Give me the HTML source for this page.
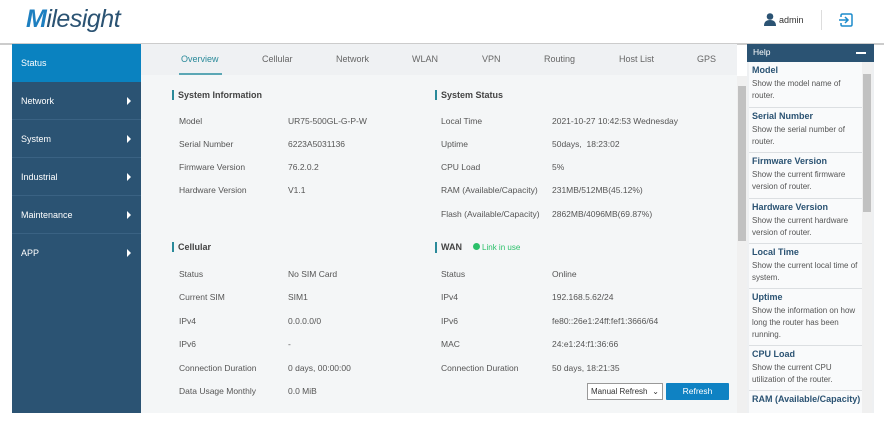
<!DOCTYPE html>
<html><head><meta charset="utf-8"><style>
*{margin:0;padding:0;box-sizing:border-box}
body{width:884px;height:422px;background:#fff;font-family:"Liberation Sans",sans-serif;position:relative;overflow:hidden;color:#333}
.a{position:absolute;white-space:nowrap}
.side{left:12px;top:44px;width:129px;height:369px;background:#2b5373}
.si{position:absolute;left:0;width:129px;height:38px;color:#fff;font-size:9px;padding-left:9px;line-height:38px;border-bottom:1px solid #3a6283}
.si i{position:absolute;right:10px;top:15px;width:0;height:0;border-left:4px solid #fff;border-top:4px solid transparent;border-bottom:4px solid transparent}
.main{left:141px;top:44px;width:596px;height:369px;background:#f4f6f7}
.tab{position:absolute;top:10px;font-size:9px;color:#666}
.t{font-size:8.5px;color:#555}
.h{font-size:9px;font-weight:bold;color:#444;border-left:2px solid #2a8a9a;padding-left:4px;line-height:10px}
.help{left:747px;top:44px;width:127px;height:369px;background:#eef0f2;overflow:hidden}
.hi{position:absolute;left:2px;width:113px;background:#f9fafb;border-bottom:1px solid #dcdfe2;padding:3px 3px;white-space:normal;overflow:hidden}
.hi b{display:block;font-size:9px;color:#2b5373;margin-bottom:3px;white-space:nowrap}
.hi span{display:block;font-size:8px;color:#555;line-height:12px}
</style></head><body>
<div class="a" style="left:26px;top:5px;font-size:25px;font-style:italic;color:#2b5373;letter-spacing:-0.5px"><span style="color:#1d7fc0;font-weight:bold">M</span>ilesight</div>
<svg class="a" style="left:764px;top:13px" width="12" height="13" viewBox="0 0 12 13"><circle cx="6" cy="3.5" r="3.3" fill="#2b5373"/><path d="M0 13 Q0 7 6 7 Q12 7 12 13Z" fill="#2b5373"/></svg>
<div class="a" style="left:779px;top:15px;font-size:9px;color:#333">admin</div>
<div class="a" style="left:821px;top:10px;width:1px;height:20px;background:#ddd"></div>
<svg class="a" style="left:838px;top:13px" width="15" height="14" viewBox="0 0 15 14"><path d="M3 4V2.5Q3 1 4.5 1H12.5Q14 1 14 2.5V11.5Q14 13 12.5 13H4.5Q3 13 3 11.5V10" fill="none" stroke="#1d8ccc" stroke-width="1.5"/><path d="M1 7H10M7 4L10 7L7 10" fill="none" stroke="#1d8ccc" stroke-width="1.5"/></svg>
<div class="a" style="left:0;top:43px;width:884px;height:2px;background:#ccc"></div>
<div class="a side">
<div class="si" style="top:0;background:#0a82c0;border:none">Status</div>
<div class="si" style="top:38px">Network<i></i></div>
<div class="si" style="top:76px">System<i></i></div>
<div class="si" style="top:114px">Industrial<i></i></div>
<div class="si" style="top:152px">Maintenance<i></i></div>
<div class="si" style="top:190px;border:none">APP<i></i></div>
</div>
<div class="a main">
<div class="a" style="left:0;top:0;width:596px;height:31px;background:#eff1f3"></div>
<div class="tab" style="left:40px;color:#2a8a9a">Overview</div>
<div class="a" style="left:38px;top:29px;width:43px;height:2px;background:#5ba7b5"></div>
<div class="tab" style="left:121px">Cellular</div>
<div class="tab" style="left:195px">Network</div>
<div class="tab" style="left:271px">WLAN</div>
<div class="tab" style="left:341px">VPN</div>
<div class="tab" style="left:403px">Routing</div>
<div class="tab" style="left:478px">Host List</div>
<div class="tab" style="left:556px">GPS</div>
</div>
<div class="a h" style="left:172px;top:90px">System Information</div>
<div class="a h" style="left:435px;top:90px">System Status</div>
<div class="a h" style="left:172px;top:242px">Cellular</div>
<div class="a h" style="left:435px;top:242px">WAN <span style="display:inline-block;width:7px;height:7px;border-radius:50%;background:#2bc06a;margin-left:8px"></span> <span style="font-weight:normal;color:#2bc06a;font-size:8px">Link in use</span></div>
<div class="a t" style="left:179px;top:116px">Model</div><div class="a t" style="left:288px;top:116px">UR75-500GL-G-P-W</div>
<div class="a t" style="left:179px;top:139px">Serial Number</div><div class="a t" style="left:288px;top:139px">6223A5031136</div>
<div class="a t" style="left:179px;top:162px">Firmware Version</div><div class="a t" style="left:288px;top:162px">76.2.0.2</div>
<div class="a t" style="left:179px;top:185px">Hardware Version</div><div class="a t" style="left:288px;top:185px">V1.1</div>
<div class="a t" style="left:441px;top:116px">Local Time</div><div class="a t" style="left:552px;top:116px">2021-10-27 10:42:53 Wednesday</div>
<div class="a t" style="left:441px;top:139px">Uptime</div><div class="a t" style="left:552px;top:139px">50days,&nbsp;&nbsp;18:23:02</div>
<div class="a t" style="left:441px;top:162px">CPU Load</div><div class="a t" style="left:552px;top:162px">5%</div>
<div class="a t" style="left:441px;top:185px">RAM (Available/Capacity)</div><div class="a t" style="left:552px;top:185px">231MB/512MB(45.12%)</div>
<div class="a t" style="left:441px;top:209px">Flash (Available/Capacity)</div><div class="a t" style="left:552px;top:209px">2862MB/4096MB(69.87%)</div>
<div class="a t" style="left:179px;top:269px">Status</div><div class="a t" style="left:288px;top:269px">No SIM Card</div>
<div class="a t" style="left:179px;top:292px">Current SIM</div><div class="a t" style="left:288px;top:292px">SIM1</div>
<div class="a t" style="left:179px;top:316px">IPv4</div><div class="a t" style="left:288px;top:316px">0.0.0.0/0</div>
<div class="a t" style="left:179px;top:339px">IPv6</div><div class="a t" style="left:288px;top:339px">-</div>
<div class="a t" style="left:179px;top:363px">Connection Duration</div><div class="a t" style="left:288px;top:363px">0 days, 00:00:00</div>
<div class="a t" style="left:179px;top:386px">Data Usage Monthly</div><div class="a t" style="left:288px;top:386px">0.0 MiB</div>
<div class="a t" style="left:441px;top:269px">Status</div><div class="a t" style="left:552px;top:269px">Online</div>
<div class="a t" style="left:441px;top:292px">IPv4</div><div class="a t" style="left:552px;top:292px">192.168.5.62/24</div>
<div class="a t" style="left:441px;top:316px">IPv6</div><div class="a t" style="left:552px;top:316px">fe80::26e1:24ff:fef1:3666/64</div>
<div class="a t" style="left:441px;top:339px">MAC</div><div class="a t" style="left:552px;top:339px">24:e1:24:f1:36:66</div>
<div class="a t" style="left:441px;top:363px">Connection Duration</div><div class="a t" style="left:552px;top:363px">50 days, 18:21:35</div>
<div class="a" style="left:587px;top:383px;width:76px;height:17px;border:1px solid #999;background:#fff;font-size:8px;color:#333;padding:3px 3px">Manual Refresh <span style="float:right">&#8964;</span></div>
<div class="a" style="left:666px;top:383px;width:63px;height:17px;background:#0f82c3;color:#fff;font-size:8.5px;text-align:center;line-height:16px;border-radius:1px">Refresh</div>
<div class="a" style="left:737px;top:76px;width:10px;height:337px;background:#f0f0f0"></div>
<div class="a" style="left:738px;top:86px;width:8px;height:155px;background:#c1c1c1"></div>
<div class="a" style="left:747px;top:44px;width:127px;height:18px;background:#2b5373;color:#fff;font-size:8.5px;padding:3px 6px">Help<span style="position:absolute;right:8px;top:8px;width:10px;height:2px;background:#fff"></span></div>
<div class="a help" style="top:62px;height:351px">
<div class="hi" style="top:0;height:46px"><b>Model</b><span>Show the model name of router.</span></div>
<div class="hi" style="top:46px;height:45px"><b>Serial Number</b><span>Show the serial number of router.</span></div>
<div class="hi" style="top:91px;height:46px"><b>Firmware Version</b><span>Show the current firmware version of router.</span></div>
<div class="hi" style="top:137px;height:45px"><b>Hardware Version</b><span>Show the current hardware version of router.</span></div>
<div class="hi" style="top:182px;height:45px"><b>Local Time</b><span>Show the current local time of system.</span></div>
<div class="hi" style="top:227px;height:57px"><b>Uptime</b><span>Show the information on how long the router has been running.</span></div>
<div class="hi" style="top:284px;height:45px"><b>CPU Load</b><span>Show the current CPU utilization of the router.</span></div>
<div class="hi" style="top:329px;height:30px"><b>RAM (Available/Capacity)</b></div>
<div class="a" style="left:115px;top:0;width:10px;height:351px;background:#f0f0f0"></div>
<div class="a" style="left:116px;top:12px;width:8px;height:138px;background:#c1c1c1"></div>
</div>
<div class="a" style="left:0;top:413px;width:884px;height:9px;background:#fff"></div>
</body></html>
